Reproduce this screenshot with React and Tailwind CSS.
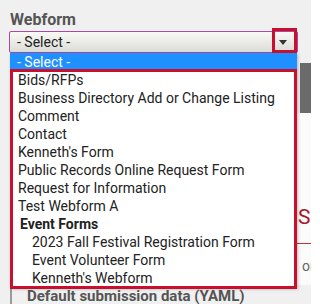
import React from "react";

const items = [
  { label: "Bids/RFPs" },
  { label: "Business Directory Add or Change Listing" },
  { label: "Comment" },
  { label: "Contact" },
  { label: "Kenneth's Form" },
  { label: "Public Records Online Request Form" },
  { label: "Request for Information" },
  { label: "Test Webform A" },
  { label: "Event Forms", group: true },
  { label: "2023 Fall Festival Registration Form", indent: true },
  { label: "Event Volunteer Form", indent: true },
  { label: "Kenneth's Webform", indent: true },
];

export default function App() {
  return (
    <div className="w-[311px] h-[304px] overflow-hidden bg-[#f0f0f0] font-['Roboto',sans-serif] text-[#222]">
      <div className="pt-[11px] pl-[9px] flex flex-col">
        <div className="ml-[1px] text-[16px] leading-[18px] font-bold text-[#555]">Webform</div>

        <div className="relative mt-[2px] w-[289px] h-[22px] z-10">
          <div className="h-full flex items-center justify-between border border-[#a64ca6] rounded-[2px] bg-gradient-to-b from-[#f9f9f6] to-[#dcdcd7] pl-[7px] pr-[8px]">
            <span className="text-[14px] leading-[18px] text-[#222]">- Select -</span>
            <svg width="8" height="5" viewBox="0 0 8 5" className="mr-[2px]">
              <polygon points="0,0 8,0 4,5" fill="#333" />
            </svg>
          </div>

          <div className="absolute top-[22px] left-[1px] w-[287px] bg-white shadow-[1px_1px_3px_rgba(0,0,0,0.25)]">
            <div className="h-[18px] leading-[18px] pl-[7px] text-[14px] text-white bg-[#1e90ff]">- Select -</div>
            {items.map((it, i) => (
              <div
                key={i}
                className={
                  it.group
                    ? "h-[18px] leading-[18px] pl-[10px] text-[14px] font-bold text-[#222]"
                    : it.indent
                    ? "h-[18px] leading-[18px] pl-[22px] text-[14px] text-[#222]"
                    : "h-[18px] leading-[18px] pl-[8px] text-[14px] text-[#222]"
                }
              >
                {it.label}
              </div>
            ))}
            <div className="h-[1px]" />
          </div>

          <div className="absolute left-[263px] top-[-3px] w-[25px] h-[25px] border-[3px] border-[#c8102e] pointer-events-none" />
          <div className="absolute left-[1px] top-[38px] w-[287px] h-[220px] border-[3px] border-[#c8102e] pointer-events-none" />
        </div>

        <div className="mt-[10px] h-[50px] ml-[291px] bg-[#6b6b6b]" />

        <div className="h-[172px] ml-[288px] bg-[#fbfbfb] flex flex-col">
          <div className="mt-[92px] pl-[1px] text-[21px] leading-[24px] text-[#a6192e] whitespace-nowrap">Schedule</div>
          <div className="mt-[14px] h-[1px] bg-[#c0392b]" />
          <div className="mt-[14px] pl-[5px] text-[14px] leading-[16px] text-[#666] whitespace-nowrap">or</div>
        </div>

        <div className="mt-[4px] ml-[1px] border-l-2 border-[#9a9a9a] pl-[15px] h-[20px]">
          <div className="text-[15px] leading-[14px] font-bold text-[#555] whitespace-nowrap">Default submission data (YAML)</div>
        </div>
      </div>
    </div>
  );
}
